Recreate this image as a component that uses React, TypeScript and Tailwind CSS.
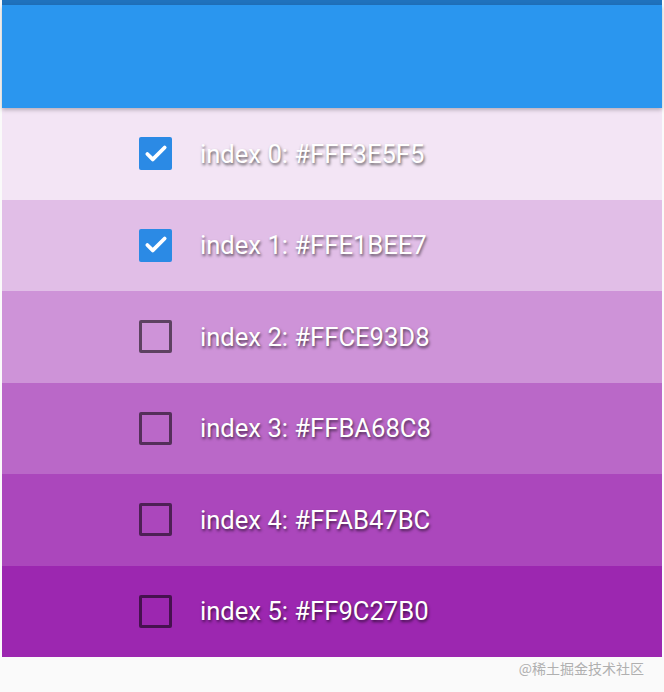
import { Check } from "lucide-react";

const rows = [
  { bg: "bg-[#f3e5f5]", label: "index 0: #FFF3E5F5", checked: true },
  { bg: "bg-[#e1bee7]", label: "index 1: #FFE1BEE7", checked: true },
  { bg: "bg-[#ce93d8]", label: "index 2: #FFCE93D8", checked: false },
  { bg: "bg-[#ba68c8]", label: "index 3: #FFBA68C8", checked: false },
  { bg: "bg-[#ab47bc]", label: "index 4: #FFAB47BC", checked: false },
  { bg: "bg-[#9c27b0]", label: "index 5: #FF9C27B0", checked: false },
];

export default function App() {
  return (
    <div className="flex h-[692px] w-[664px] flex-col bg-[#fafafa] pl-[2px] pr-[2px] font-['Roboto',sans-serif]">
      <div className="h-[5px] shrink-0 bg-[#1f72bd]" />
      <div className="relative z-10 h-[103px] shrink-0 bg-[#2a96ef] shadow-[0_2px_4px_rgba(0,0,0,0.25)]" />
      <div className="flex flex-col">
        {rows.map((row, i) => (
          <div
            key={i}
            className={`flex h-[91.5px] items-center pl-[137px] ${row.bg}`}
          >
            {row.checked ? (
              <span className="flex h-[33px] w-[33px] items-center justify-center rounded-[2px] bg-[#2b8ae5]">
                <Check className="h-[26px] w-[26px] text-white" strokeWidth={3.5} />
              </span>
            ) : (
              <span className="h-[33px] w-[33px] rounded-[2px] border-[3.5px] border-black/55" />
            )}
            <span className="ml-[28px] text-[25.6px] text-white [text-shadow:1px_2px_3px_rgba(0,0,0,0.6)]">
              {row.label}
            </span>
          </div>
        ))}
      </div>
      <div className="flex flex-1 items-start justify-end pr-[18px] pt-[1px]">
        <span className="font-['Noto_Sans_CJK_SC',sans-serif] text-[14px] text-[#b0b0b0]">
          @稀土掘金技术社区
        </span>
      </div>
    </div>
  );
}
